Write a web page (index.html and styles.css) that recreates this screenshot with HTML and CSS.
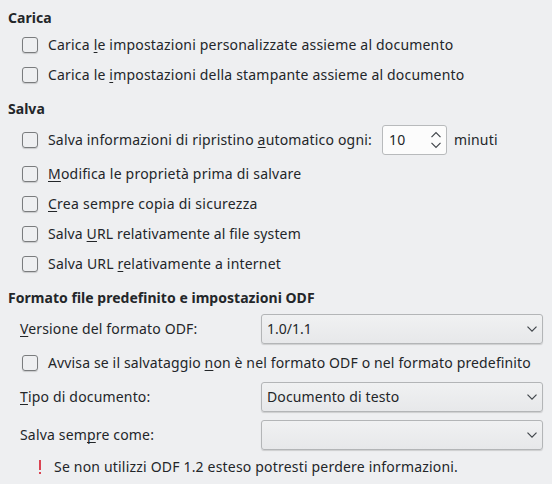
FILE: index.html
```html
<!DOCTYPE html>
<html lang="it">
<head>
<meta charset="utf-8">
<title>Carica/Salva - Generale</title>
<link rel="stylesheet" href="styles.css">
</head>
<body>
<main class="page">
  <section class="section load">
    <h2>Carica</h2>
    <label class="row check t19"><span class="box"></span><span>Carica <u>l</u>e impostazioni personalizzate assieme al documento</span></label>
    <label class="row check t19"><span class="box"></span><span>Carica le <u>i</u>mpostazioni della stampante assieme al documento</span></label>
  </section>
  <section class="section save">
    <h2>Salva</h2>
    <div class="row check spinrow"><span class="box"></span><span class="spinlabel">Salva informazioni di ripristino <u>a</u>utomatico ogni:</span>
      <div class="spin"><span>10</span>
        <svg width="12" height="18" viewBox="0 0 12 18"><path d="M1.5 6.2 6 1.7l4.500 4.500M1.500 11.800 6 16.300l4.500-4.500"/></svg>
      </div><span>minuti</span></div>
    <label class="row check t22"><span class="box"></span><span><u>M</u>odifica le proprietà prima di salvare</span></label>
    <label class="row check t26"><span class="box"></span><span><u>C</u>rea sempre copia di sicurezza</span></label>
    <label class="row check t14"><span class="box"></span><span>Salva <u>U</u>RL relativamente al file system</span></label>
    <label class="row check t19"><span class="box"></span><span>Salva URL <u>r</u>elativamente a internet</span></label>
  </section>
  <section class="section format">
    <h2>Formato file predefinito e impostazioni ODF</h2>
    <div class="row field first t14"><span><u>V</u>ersione del formato ODF:</span>
      <div class="combo t0"><span>1.0/1.1</span><svg width="12" height="8" viewBox="0 0 12 8"><path d="M1.500 1.700 6 6.200l4.500-4.500"/></svg></div></div>
    <label class="row check t14"><span class="box"></span><span>Avvisa se il salvataggio <u>n</u>on è nel formato ODF o nel formato predefinito</span></label>
    <div class="row field type"><span><u>T</u>ipo di documento:</span>
      <div class="combo t14"><span>Documento di testo</span><svg width="12" height="8" viewBox="0 0 12 8"><path d="M1.500 1.700 6 6.200l4.500-4.500"/></svg></div></div>
    <div class="row field as"><span>Salva sem<u>p</u>re come:</span>
      <div class="combo"><span></span><svg width="12" height="8" viewBox="0 0 12 8"><path d="M1.500 1.700 6 6.200l4.500-4.500"/></svg></div></div>
    <div class="row warning t19"><svg width="2" height="15" viewBox="0 0 2 15"><path d="M0 0h2v10H0zM0 12h2v2H0z"/></svg><span>Se non utilizzi ODF 1.2 esteso potresti perdere informazioni.</span></div>
  </section>
</main>
</body>
</html>
```
FILE: styles.css
```css
* { box-sizing: border-box; }
body {
  margin: 0;
  background: #eeeff1;
  color: #232629;
  font: 14px/20px "Noto Sans", sans-serif;
  letter-spacing: .17px;
  font-feature-settings: "liga" 1;
}
.page { padding: 6px 9px 0 8px; height: 484px; overflow: hidden; }
h2 { margin: 0; height: 24px; font-size: 14px; line-height: 24px; font-weight: 700; letter-spacing: .03px; }
.row { display: flex; align-items: center; height: 30px; white-space: nowrap; }
.t0 { letter-spacing: 0; }
.t14 { letter-spacing: .14px; }
.t19 { letter-spacing: .19px; }
.t22 { letter-spacing: .22px; }
.t26 { letter-spacing: .26px; }
.save, .format { margin-top: 7px; }
u { text-decoration: underline 1px; text-underline-offset: 2px; text-decoration-skip-ink: none; }
.check { padding-left: 14px; }
.box {
  width: 16px; height: 16px; margin-right: 10px; flex: none;
  border: 1px solid #7a7c7e; border-radius: 3px;
  box-shadow: 0 1px 1px rgba(0,0,0,.16);
}
.spinrow { margin: 4px 0; }
.spinlabel { width: 334px; }
.spin {
  display: flex; align-items: center; justify-content: space-between;
  width: 65px; height: 30px; margin-right: 7px; padding: 0 4px 0 6px;
  background: #fcfcfc; border: 1px solid #b8babc; border-radius: 3px;
}
svg { display: block; flex: none; fill: none; stroke: #41464b; stroke-width: 1.2; }
.field { padding-left: 12px; justify-content: space-between; }
.first { margin: 4px 0; }
.type { margin: 4px 0 8px; }
.combo {
  display: flex; align-items: center; justify-content: space-between;
  width: 282px; height: 30px; padding: 0 4px 0 5px;
  background: linear-gradient(#f0f1f2, #e7e8ea);
  border: 1px solid #b3b5b7; border-radius: 3px;
  box-shadow: 0 1px 1px rgba(0,0,0,.14);
}
.warning { margin-top: 2px; padding-left: 31px; gap: 13px; }
.warning svg { fill: #da4453; stroke: none; }
```
